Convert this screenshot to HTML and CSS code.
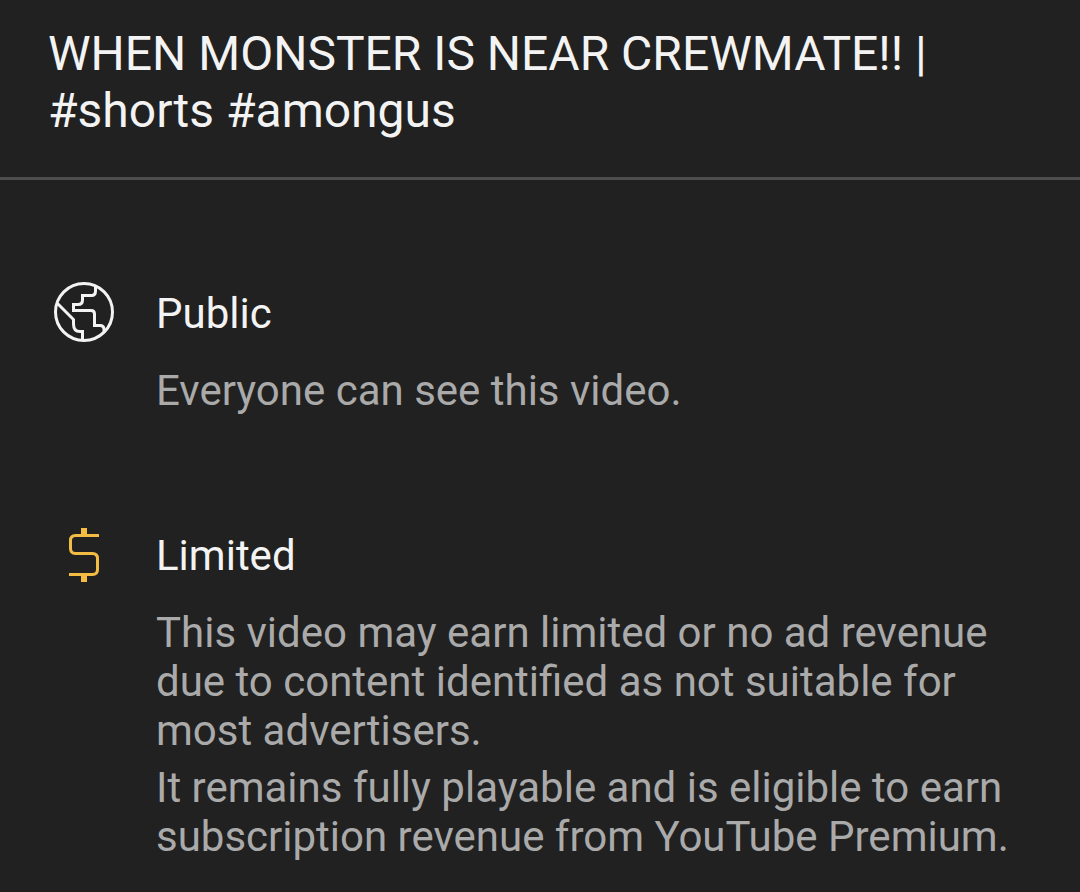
FILE: index.html
```html
<!DOCTYPE html>
<html lang="en">
<head>
<meta charset="utf-8">
<meta name="viewport" content="width=device-width, initial-scale=1">
<title>Video details</title>
<link rel="stylesheet" href="styles.css">
</head>
<body>
<header class="header">
  <h1 class="title">WHEN MONSTER IS NEAR CREWMATE!! | #shorts #amongus</h1>
</header>
<main class="details">
  <section class="item">
    <svg class="icon" viewBox="0 0 72 68" fill="none" stroke="#f3f3f3" stroke-width="3" aria-hidden="true">
      <circle cx="36" cy="34" r="28.5"/>
      <path d="M47.5 8V13Q47.5 17.5 43.5 17.5H34.5V22Q34.5 26.5 30 26.5H25.5V32.5H43Q46.5 32.5 46.5 36V47.5H52Q56 47.5 56 51.5V54"/>
      <path d="M9.5 25.5L25.5 41.5V46Q25.5 53.5 32 53.5H34.5V62"/>
    </svg>
    <div class="body">
      <h2 class="name">Public</h2>
      <p class="text">Everyone can see this video.</p>
    </div>
  </section>
  <section class="item">
    <svg class="icon" viewBox="0 0 72 68" fill="none" stroke="#f2bd42" stroke-width="3" aria-hidden="true">
      <path d="M51 15.500H27.500Q22.500 15.500 22.500 20.500V28.500Q22.500 33.500 27.500 33.500H44.500Q49.500 33.500 49.500 38.500V49.500Q49.500 54.500 44.500 54.500H21"/>
      <path d="M36 8V16M36 54V62" stroke-width="6"/>
    </svg>
    <div class="body">
      <h2 class="name">Limited</h2>
      <p class="text">This video may earn limited or no ad revenue due to content identified as not suitable for most advertisers.</p>
      <p class="text">It remains fully playable and is eligible to earn subscription revenue from YouTube Premium.</p>
    </div>
  </section>
</main>
</body>
</html>
```
FILE: styles.css
```css
body {
  margin: 0;
  background: #212121;
  color: #f3f3f3;
  font-family: Roboto, sans-serif;
}

.header {
  padding: 25px 48px 38px;
  border-bottom: 3px solid #4d4d4d;
}

.title {
  margin: 0;
  font-size: 48px;
  font-weight: 400;
  line-height: 57px;
}

.details {
  display: flex;
  flex-direction: column;
  gap: 105px;
  padding: 98px 48px 24px;
}

.item {
  display: flex;
  gap: 36px;
}

.icon {
  flex: none;
  width: 72px;
  height: 68px;
}

.body {
  flex: 1;
}

.name,
.text {
  margin: 0;
  font-size: 42px;
  font-weight: 400;
  line-height: 49px;
}

.name {
  padding-top: 11px;
  margin-bottom: 28px;
}

.text {
  color: #aaa;
}

.text + .text {
  margin-top: 8px;
}
```
